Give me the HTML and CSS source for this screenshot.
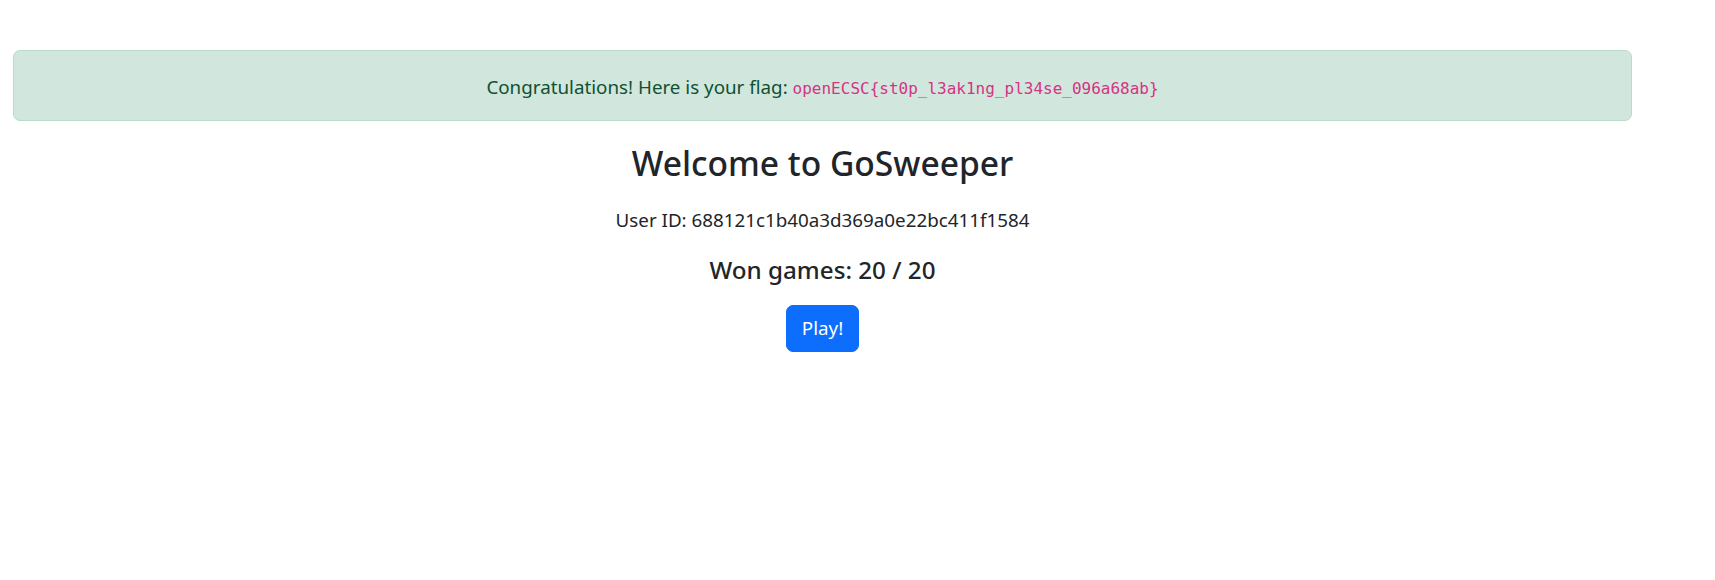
FILE: index.html
```html
<!DOCTYPE html>
<html lang="en">
<head>
<meta charset="utf-8">
<title>GoSweeper</title>
<link rel="stylesheet" href="styles.css">
</head>
<body>
<div class="page">
  <div class="alert">Congratulations! Here is your flag: <code class="flag">openECSC{st0p_l3ak1ng_pl34se_096a68ab}</code></div>
  <main class="welcome">
    <h3 class="title">Welcome to GoSweeper</h3>
    <p class="user-id">User ID: 688121c1b40a3d369a0e22bc411f1584</p>
    <h5 class="won">Won games: 20 / 20</h5>
    <a class="btn-play" href="#">Play!</a>
  </main>
</div>
</body>
</html>
```
FILE: styles.css
```css
html, body {
  margin: 0;
  padding: 0;
  background: #ffffff;
}
body {
  font-family: "Noto Sans", "Open Sans", sans-serif;
  font-size: 18.8px;
  line-height: 29px;
  color: #212529;
}
.page {
  width: 1619px;
  margin-left: 13px;
  padding-top: 50px;
}
.alert {
  box-sizing: border-box;
  height: 71px;
  padding: 22px 16px 18px;
  border: 1px solid #badbcc;
  border-radius: 7px;
  background: #d1e7dd;
  color: #0f5132;
  text-align: center;
  line-height: 29px;
}
.flag {
  font-family: "DejaVu Sans Mono", "Liberation Mono", monospace;
  font-size: 16px;
  color: #d63384;
}
.welcome {
  display: flex;
  flex-direction: column;
  align-items: center;
  text-align: center;
}
.title {
  margin: 22px 0 0;
  font-size: 33.6px;
  line-height: 40px;
  font-weight: 500;
}
.user-id {
  margin: 22.5px 0 0;
  line-height: 28px;
}
.won {
  margin: 21.5px 0 0;
  font-size: 24.2px;
  line-height: 29px;
  font-weight: 500;
}
.btn-play {
  box-sizing: border-box;
  margin-top: 21px;
  height: 47px;
  padding: 8px 15px;
  border: 1px solid #0d6efd;
  border-radius: 7px;
  background: #0d6efd;
  color: #ffffff;
  text-decoration: none;
  line-height: 29px;
}
```
